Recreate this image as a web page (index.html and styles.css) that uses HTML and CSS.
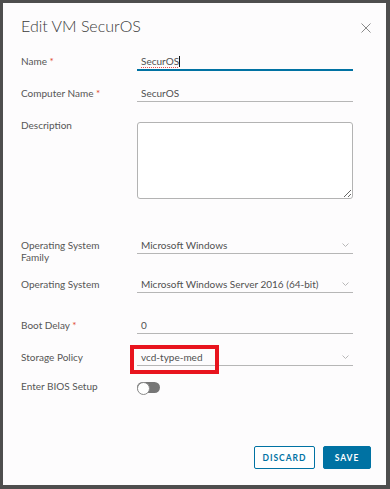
FILE: index.html
```html
<!DOCTYPE html>
<html lang="en">
<head>
<meta charset="utf-8">
<title>Edit VM SecurOS</title>
<link rel="stylesheet" href="styles.css">
</head>
<body>
<div class="modal">
  <header class="modal-header">
    <h2 class="title">Edit VM SecurOS</h2>
    <button class="close" type="button" aria-label="Close">
      <svg width="10" height="10" viewBox="0 0 10 10"><path d="M0.5 0.5 L9.5 9.5 M9.5 0.5 L0.5 9.5" stroke="#8a8a8a" stroke-width="1" fill="none"/></svg>
    </button>
  </header>
  <form class="form">
    <label class="label">Name <span class="req">*</span></label>
    <div class="field field-focus"><span class="spell">SecurOS</span><span class="caret"></span></div>

    <label class="label">Computer Name <span class="req">*</span></label>
    <div class="field">SecurOS</div>

    <label class="label">Description</label>
    <textarea class="textarea"></textarea>

    <label class="label">Operating System<br>Family</label>
    <div class="field select">Microsoft Windows
      <svg class="chev" width="7" height="4" viewBox="0 0 7 4"><path d="M0.5 0.5 L3.5 3.5 L6.5 0.5" stroke="#b8b8b8" fill="none"/></svg>
    </div>

    <label class="label">Operating System</label>
    <div class="field select">Microsoft Windows Server 2016 (64-bit)
      <svg class="chev" width="7" height="4" viewBox="0 0 7 4"><path d="M0.5 0.5 L3.5 3.5 L6.5 0.5" stroke="#b8b8b8" fill="none"/></svg>
    </div>

    <label class="label">Boot Delay <span class="req">*</span></label>
    <div class="field">0</div>

    <label class="label">Storage Policy</label>
    <div class="field select">vcd-type-med
      <svg class="chev" width="7" height="4" viewBox="0 0 7 4"><path d="M0.5 0.5 L3.5 3.5 L6.5 0.5" stroke="#b8b8b8" fill="none"/></svg>
      <span class="highlight"></span>
    </div>

    <label class="label">Enter BIOS Setup</label>
    <div class="toggle-cell"><span class="toggle"></span></div>
  </form>
  <footer class="actions">
    <button class="btn btn-outline" type="button">DISCARD</button>
    <button class="btn btn-primary" type="button">SAVE</button>
  </footer>
</div>
</body>
</html>
```

FILE: styles.css
```css
* { box-sizing: border-box; }

html, body {
  margin: 0;
}

body {
  width: 390px;
  height: 489px;
  padding: 3px 4px 4px 3px;
  background: #4e4e4e;
  font-family: "Lato", "Open Sans", sans-serif;
  color: #565656;
}

.modal {
  width: 383px;
  height: 482px;
  background: #fdfcfd;
  display: flex;
  flex-direction: column;
  padding: 13px 15px 16px 18px;
}

.modal-header {
  display: flex;
  align-items: center;
  justify-content: space-between;
}

.title {
  margin: 0;
  font-size: 16px;
  line-height: 20px;
  font-weight: 300;
  color: #3a3a3a;
}

.close {
  border: 0;
  background: none;
  padding: 0;
  width: 10px;
  height: 10px;
  display: flex;
  margin-top: 4px;
}

.form {
  margin-top: 17px;
  display: grid;
  grid-template-columns: 116px 216px;
  grid-template-rows: 32px 32px 120px 39px 41px 32px 29px auto;
  align-items: start;
}

.label {
  font-size: 10px;
  line-height: 12px;
  padding-top: 2px;
  color: #565656;
}

.req {
  color: #e0482e;
}

.field {
  position: relative;
  height: 17px;
  font-size: 10px;
  line-height: 16px;
  padding-left: 4px;
  color: #505050;
  border-bottom: 1px solid #b6b6b6;
  display: flex;
  align-items: center;
}

.field-focus {
  height: 18px;
  border-bottom: 2px solid #0072a3;
}

.spell {
  text-decoration: underline dotted #e05050;
  text-underline-offset: 2px;
}

.caret {
  display: inline-block;
  width: 1px;
  height: 11px;
  background: #111;
}

.textarea {
  display: block;
  margin: 5px 0 0;
  width: 216px;
  height: 77px;
  border: 1px solid #b3b3b3;
  border-radius: 3px;
  background: #fff;
  font-family: inherit;
}

.select .chev {
  position: absolute;
  right: 4px;
  top: 6px;
}

.highlight {
  position: absolute;
  left: -7px;
  top: -4px;
  width: 89px;
  height: 29px;
  border: 4px solid #e8141e;
}

.toggle-cell {
  padding-top: 4px;
}

.toggle {
  display: block;
  position: relative;
  width: 23px;
  height: 11px;
  border-radius: 6px;
  background: #767676;
}

.toggle::before {
  content: "";
  position: absolute;
  left: 0;
  top: 0;
  width: 11px;
  height: 11px;
  border-radius: 50%;
  background: #fff;
  border: 1px solid #8a8a8a;
}

.actions {
  margin-top: auto;
  display: flex;
  justify-content: flex-end;
  gap: 8px;
}

.btn {
  height: 23px;
  border-radius: 2px;
  font-family: "Lato", "Open Sans", sans-serif;
  font-size: 8.5px;
  font-weight: 700;
  letter-spacing: 1px;
  padding: 0;
  cursor: pointer;
}

.btn-outline {
  width: 61px;
  background: #fff;
  color: #0072a3;
  border: 1px solid #0072a3;
}

.btn-primary {
  width: 48px;
  background: #0072a3;
  color: #fff;
  border: 1px solid #0072a3;
}
```
